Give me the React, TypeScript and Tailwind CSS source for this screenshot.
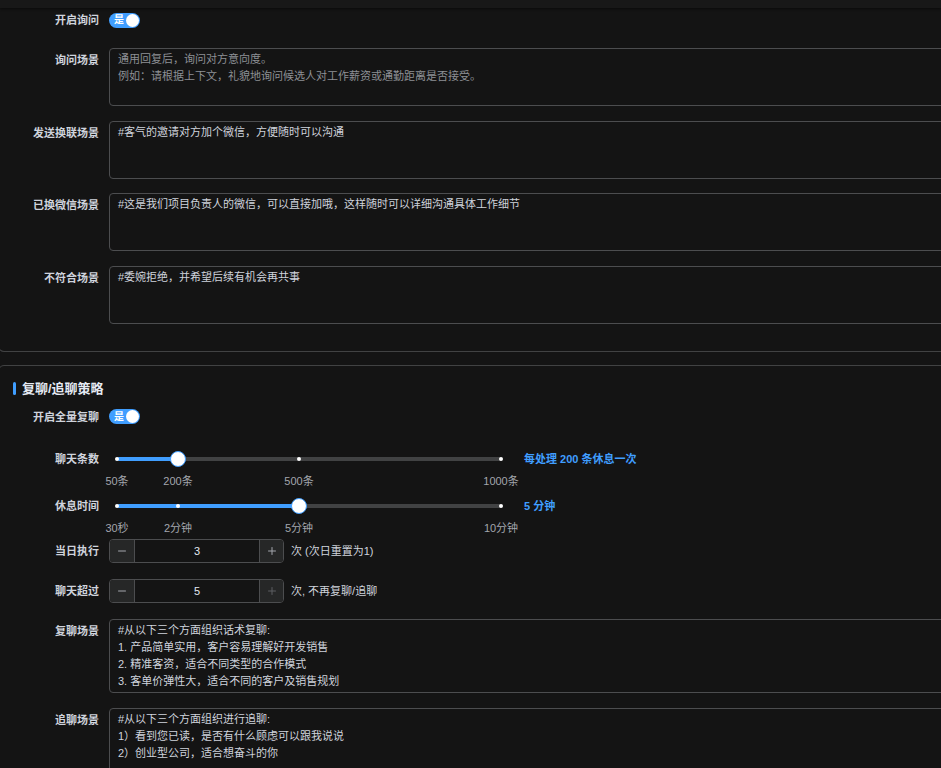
import { Minus, Plus } from 'lucide-react';

const font = "font-['Liberation_Sans','Noto_Sans_CJK_SC',sans-serif]";

function Toggle() {
    return (
        <div className="flex h-[15px] w-[31px] items-center justify-between rounded-full bg-[#409eff] pl-[5px] pr-[1px]">
            <span className="text-[10px] font-bold leading-none text-white">是</span>
            <span className="h-[13px] w-[13px] rounded-full bg-white" />
        </div>
    );
}

function Label({ children, lh = 'leading-[24px]' }: { children: React.ReactNode; lh?: string }) {
    return (
        <div className={`w-[98px] shrink-0 pr-0 text-right text-[11px] font-bold text-[#cfd3dc] ${lh}`}>{children}</div>
    );
}

function Area({ value, placeholder, h }: { value?: string; placeholder?: string; h: string }) {
    return (
        <textarea
            readOnly
            value={value}
            placeholder={placeholder}
            className={`${h} w-[900px] resize-none rounded-[4px] border border-[#4c4d4f] bg-[#141414] px-2 py-[2px] text-[11px] leading-[17px] text-[#cfd3dc] outline-none placeholder:text-[#8d9095]`}
        />
    );
}

type Mark = { at: number; label: string };

function Slider({ marks, value, text }: { marks: Mark[]; value: number; text: string }) {
    return (
        <div className="flex items-start">
            <div className="relative ml-[18px] h-[38px] w-[384px]">
                <div className="absolute left-0 right-0 top-[6px] h-1 rounded-full bg-[#414243]" />
                <div className="absolute left-0 top-[6px] h-1 rounded-full bg-[#409eff]" style={{ width: value }} />
                {marks.map((m) => (
                    <div key={m.label}>
                        {m.at !== value && (
                            <span
                                className="absolute top-[6px] h-1 w-1 -translate-x-1/2 rounded-full bg-white"
                                style={{ left: m.at }}
                            />
                        )}
                        <span
                            className="absolute top-[22px] -translate-x-1/2 whitespace-nowrap text-[11px] leading-[16px] text-[#a3a6ad]"
                            style={{ left: m.at }}
                        >
                            {m.label}
                        </span>
                    </div>
                ))}
                <span
                    className="absolute top-0 h-4 w-4 -translate-x-1/2 rounded-full border border-[#409eff] bg-white"
                    style={{ left: value }}
                />
            </div>
            <div className="ml-[23px] text-[11px] font-bold leading-[16px] text-[#409eff]">{text}</div>
        </div>
    );
}

function Stepper({ value, suffix, plusDisabled }: { value: number; suffix: string; plusDisabled?: boolean }) {
    return (
        <div className="flex items-center">
            <div className="flex h-[24px] w-[175px] overflow-hidden rounded-[4px] border border-[#4c4d4f]">
                <div className="flex w-[25px] items-center justify-center border-r border-[#4c4d4f] bg-[#262727] text-[#a3a6ad]">
                    <Minus size={12} />
                </div>
                <div className="flex flex-1 items-center justify-center bg-[#141414] text-[11px] text-[#e5eaf3]">{value}</div>
                <div
                    className={`flex w-[24px] items-center justify-center border-l border-[#4c4d4f] bg-[#262727] ${plusDisabled ? 'text-[#5c5e62]' : 'text-[#a3a6ad]'}`}
                >
                    <Plus size={12} />
                </div>
            </div>
            <span className="ml-[7px] text-[11px] text-[#cfd3dc]">{suffix}</span>
        </div>
    );
}

const countMarks: Mark[] = [
    { at: 0, label: '50条' },
    { at: 61, label: '200条' },
    { at: 182, label: '500条' },
    { at: 384, label: '1000条' },
];

const restMarks: Mark[] = [
    { at: 0, label: '30秒' },
    { at: 61, label: '2分钟' },
    { at: 182, label: '5分钟' },
    { at: 384, label: '10分钟' },
];

export default function App() {
    return (
        <div className={`relative h-[768px] w-[941px] overflow-hidden bg-[#141414] ${font}`}>
            {/* header shadow strip */}
            <div className="relative z-10 h-2 bg-[#181818] shadow-[0_1px_3px_rgba(0,0,0,0.5)]" />

            {/* card 1: inquiry scenes */}
            <div className="-ml-[2px] w-[1000px] rounded-b-[6px] border-x border-b border-[#414243] pb-[27px] pl-[2px]">
                <div className="flex items-center gap-[10px]">
                    <Label>开启询问</Label>
                    <Toggle />
                </div>
                <div className="mt-4 flex flex-col gap-[14.6px]">
                    <div className="flex items-start gap-[10px]">
                        <Label>询问场景</Label>
                        <Area
                            h="h-[58px]"
                            placeholder={'通用回复后，询问对方意向度。\n例如：请根据上下文，礼貌地询问候选人对工作薪资或通勤距离是否接受。'}
                        />
                    </div>
                    <div className="flex items-start gap-[10px]">
                        <Label>发送换联场景</Label>
                        <Area h="h-[58px]" value="#客气的邀请对方加个微信，方便随时可以沟通" />
                    </div>
                    <div className="flex items-start gap-[10px]">
                        <Label>已换微信场景</Label>
                        <Area h="h-[58px]" value="#这是我们项目负责人的微信，可以直接加哦，这样随时可以详细沟通具体工作细节" />
                    </div>
                    <div className="flex items-start gap-[10px]">
                        <Label>不符合场景</Label>
                        <Area h="h-[58px]" value="#委婉拒绝，并希望后续有机会再共事" />
                    </div>
                </div>
            </div>

            {/* card 2: follow-up strategy */}
            <div className="-ml-[2px] mt-[13px] w-[1000px] rounded-[6px] border border-[#414243] pl-[2px] pt-[13px]">
                <div className="flex h-[20px] items-center">
                    <span className="ml-[12px] h-[13px] w-[3px] rounded-full bg-[#409eff]" />
                    <span className="ml-[6px] text-[13px] font-semibold text-[#e5eaf3]">复聊/追聊策略</span>
                </div>
                <div className="mt-[6px] flex items-center gap-[10px]">
                    <Label>开启全量复聊</Label>
                    <Toggle />
                </div>
                <div className="mt-[22px] flex items-start gap-0">
                    <Label lh="leading-[16px]">聊天条数</Label>
                    <Slider marks={countMarks} value={61} text="每处理 200 条休息一次" />
                </div>
                <div className="mt-[9px] flex items-start gap-0">
                    <Label lh="leading-[16px]">休息时间</Label>
                    <Slider marks={restMarks} value={182} text="5 分钟" />
                </div>
                <div className="mt-[3px] flex items-center gap-[10px]">
                    <Label>当日执行</Label>
                    <Stepper value={3} suffix="次 (次日重置为1)" />
                </div>
                <div className="mt-4 flex items-center gap-[10px]">
                    <Label>聊天超过</Label>
                    <Stepper value={5} suffix="次, 不再复聊/追聊" plusDisabled />
                </div>
                <div className="mt-4 flex items-start gap-[10px]">
                    <Label>复聊场景</Label>
                    <Area
                        h="h-[74px]"
                        value={'#从以下三个方面组织话术复聊:\n1. 产品简单实用，客户容易理解好开发销售\n2. 精准客资，适合不同类型的合作模式\n3. 客单价弹性大，适合不同的客户及销售规划'}
                    />
                </div>
                <div className="mt-[15px] flex items-start gap-[10px]">
                    <Label>追聊场景</Label>
                    <Area
                        h="h-[74px]"
                        value={'#从以下三个方面组织进行追聊:\n1）看到您已读，是否有什么顾虑可以跟我说说\n2）创业型公司，适合想奋斗的你'}
                    />
                </div>
            </div>
        </div>
    );
}
